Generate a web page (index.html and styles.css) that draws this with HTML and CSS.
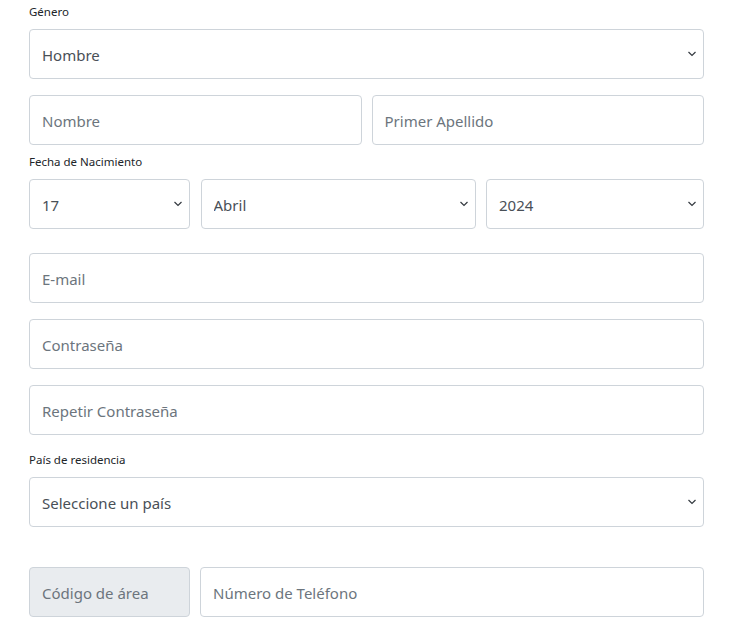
FILE: index.html
```html
<!DOCTYPE html>
<html lang="es">
<head>
<meta charset="utf-8">
<link rel="stylesheet" href="styles.css">
</head>
<body>
<form class="form">
  <div class="group">
    <label class="label" for="genero">Género</label>
    <div class="select-wrap">
      <select id="genero" class="control"><option>Hombre</option><option>Mujer</option></select>
      <svg class="chev" width="10" height="6" viewBox="0 0 10 6"><path d="M1.5 1l3.5 3.5 3.5-3.5" fill="none" stroke="#343a40" stroke-width="1.2"/></svg>
    </div>
  </div>

  <div class="row two gap16">
    <input class="control" placeholder="Nombre">
    <input class="control" placeholder="Primer Apellido">
  </div>

  <div class="group gap8">
    <label class="label">Fecha de Nacimiento</label>
    <div class="row three">
      <div class="select-wrap">
        <select class="control"><option>17</option></select>
        <svg class="chev" width="10" height="6" viewBox="0 0 10 6"><path d="M1.5 1l3.5 3.5 3.5-3.5" fill="none" stroke="#343a40" stroke-width="1.2"/></svg>
      </div>
      <div class="select-wrap">
        <select class="control"><option>Abril</option></select>
        <svg class="chev" width="10" height="6" viewBox="0 0 10 6"><path d="M1.5 1l3.5 3.5 3.5-3.5" fill="none" stroke="#343a40" stroke-width="1.2"/></svg>
      </div>
      <div class="select-wrap">
        <select class="control"><option>2024</option></select>
        <svg class="chev" width="10" height="6" viewBox="0 0 10 6"><path d="M1.5 1l3.5 3.5 3.5-3.5" fill="none" stroke="#343a40" stroke-width="1.2"/></svg>
      </div>
    </div>
  </div>

  <input class="control gap24" type="email" placeholder="E-mail">
  <input class="control gap16" type="password" placeholder="Contraseña">
  <input class="control gap16" type="password" placeholder="Repetir Contraseña">

  <div class="group gap16">
    <label class="label">País de residencia</label>
    <div class="select-wrap">
      <select class="control"><option>Seleccione un país</option></select>
      <svg class="chev" width="10" height="6" viewBox="0 0 10 6"><path d="M1.5 1l3.5 3.5 3.5-3.5" fill="none" stroke="#343a40" stroke-width="1.2"/></svg>
    </div>
  </div>

  <div class="row phone gap40">
    <input class="control readonly" placeholder="Código de área" readonly>
    <input class="control" placeholder="Número de Teléfono">
  </div>
</form>
</body>
</html>
```
FILE: styles.css
```css
* { box-sizing: border-box; }
html, body { margin: 0; padding: 0; background: #fff; }
body { font-family: "Noto Sans", "Open Sans", sans-serif; color: #495057; }
.form {
  width: 675px;
  margin-left: 29px;
  padding-top: 3px;
  display: flex;
  flex-direction: column;
}
.group { display: flex; flex-direction: column; }
.label {
  font-size: 11.5px;
  line-height: 18px;
  color: #212529;
  margin-bottom: 8px;
}
.gap8 { margin-top: 8px; }
.gap16 { margin-top: 16px; }
.gap24 { margin-top: 24px; }
.gap40 { margin-top: 40px; }
.control {
  display: block;
  width: 100%;
  height: 50px;
  padding: 1px 12px 0;
  font-family: inherit;
  font-size: 15px;
  color: #495057;
  background: #fff;
  border: 1px solid #ced4da;
  border-radius: 4px;
  outline: none;
  -webkit-appearance: none;
  appearance: none;
}
.control::placeholder { color: #6c757d; opacity: 1; }
.readonly { background: #e9ecef; }
.select-wrap { position: relative; }
.chev { position: absolute; right: 7px; top: 22px; pointer-events: none; }
.row { display: grid; column-gap: 10px; }
.two { grid-template-columns: 1fr 1fr; }
.three { grid-template-columns: 161px 275px 1fr; column-gap: 10.5px; }
.phone { grid-template-columns: 161px 1fr; }
```
